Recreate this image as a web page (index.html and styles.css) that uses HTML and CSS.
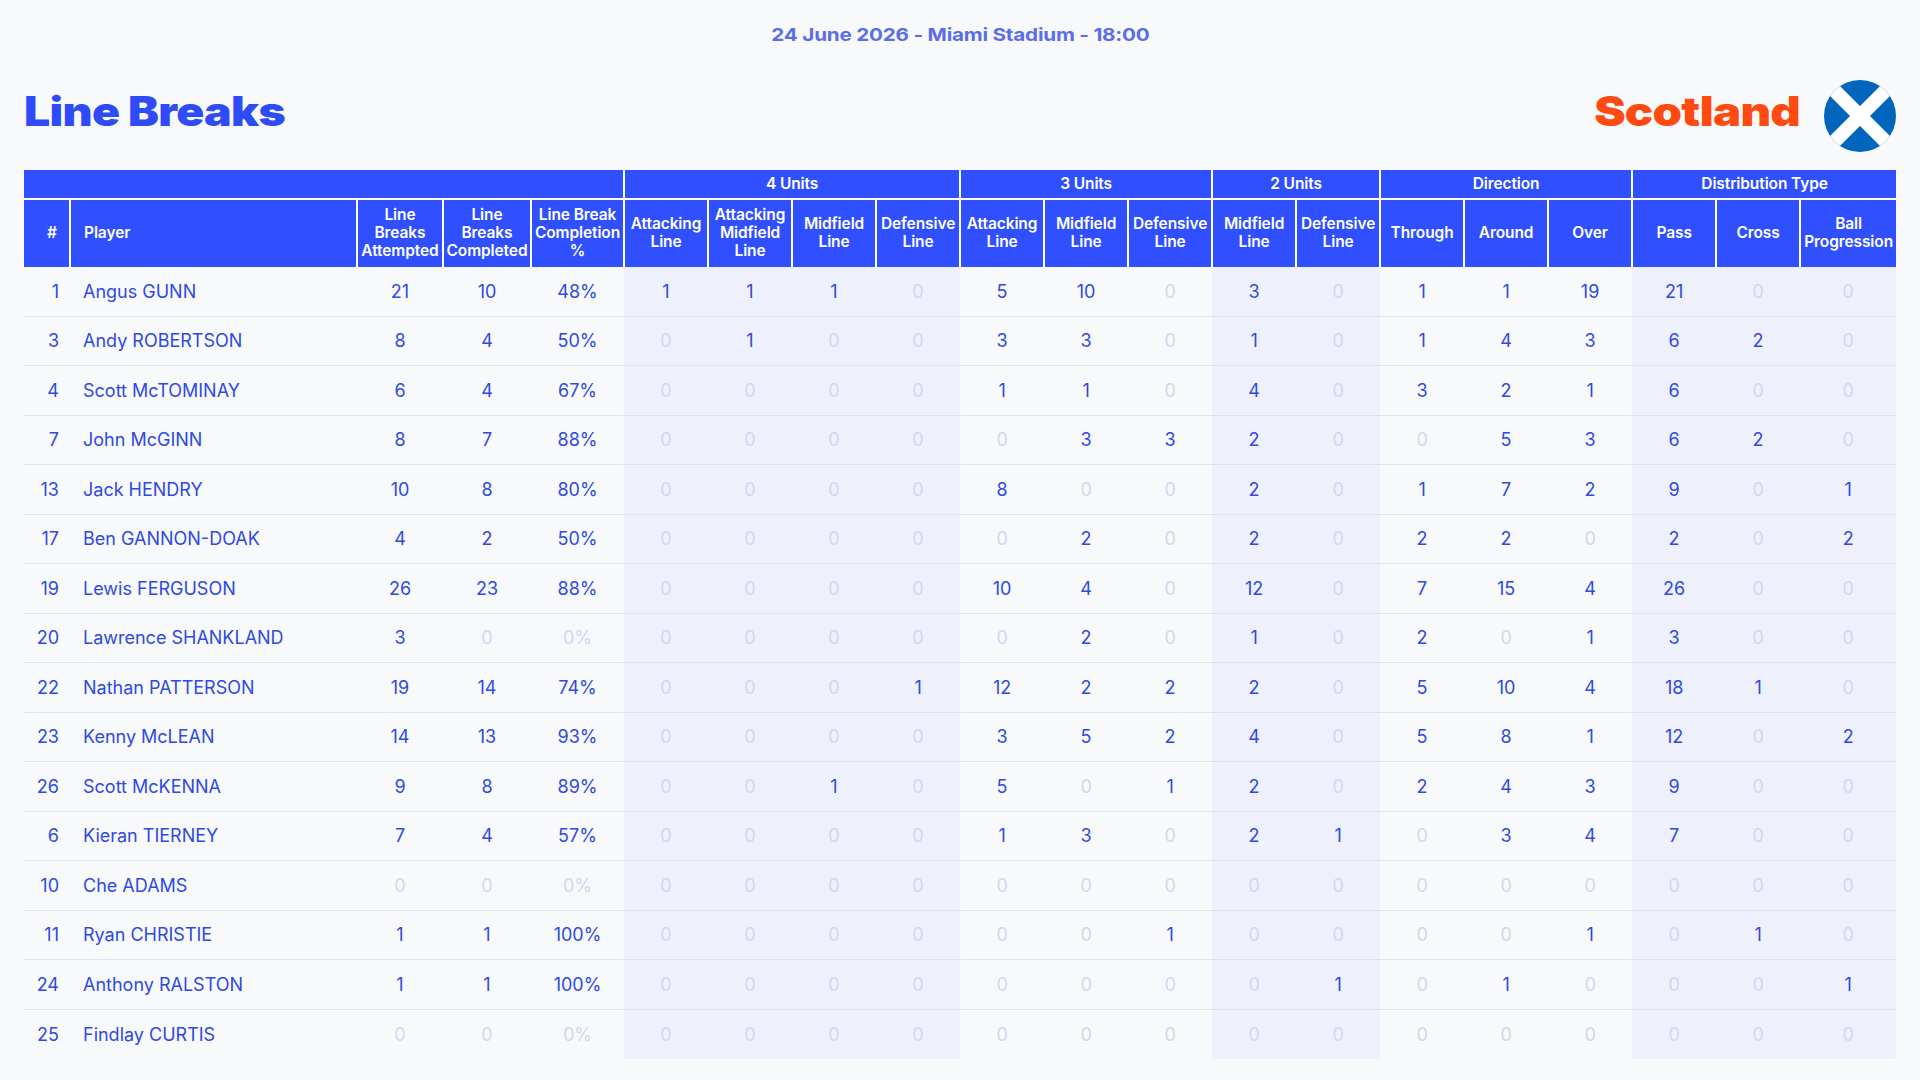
FILE: index.html
```html
<!DOCTYPE html>
<html lang="en">
<head>
<meta charset="utf-8">
<title>Line Breaks - Scotland</title>
<link rel="stylesheet" href="styles.css">
</head>
<body>
<div class="page">
  <div class="date"><span class="date-text">24 June 2026 - Miami Stadium - 18:00</span></div>
  <div class="title-row">
    <h1 class="title">Line Breaks</h1>
    <div class="team">
      <span class="team-name">Scotland</span>
      <svg class="flag" width="72" height="72" viewBox="0 0 72 72">
        <defs><clipPath id="c"><circle cx="36" cy="36" r="36"/></clipPath></defs>
        <g clip-path="url(#c)">
          <rect x="0" y="0" width="72" height="72" fill="#0065bd"/>
          <path d="M0 0 L72 72 M72 0 L0 72" stroke="#fff" stroke-width="14"/>
        </g>
      </svg>
    </div>
  </div>
  <table class="stats">
    <colgroup>
      <col class="w-num"><col class="w-player"><col class="w-att"><col class="w-comp"><col class="w-pct">
      <col class="w-std sh"><col class="w-std sh"><col class="w-std sh"><col class="w-std sh">
      <col class="w-std"><col class="w-std"><col class="w-std">
      <col class="w-std sh"><col class="w-std sh">
      <col class="w-std"><col class="w-std"><col class="w-std">
      <col class="w-std sh"><col class="w-std sh"><col class="w-bp sh">
    </colgroup>
    <thead>
      <tr class="groups">
        <th colspan="5" class="first"></th>
        <th colspan="4">4 Units</th>
        <th colspan="3">3 Units</th>
        <th colspan="2">2 Units</th>
        <th colspan="3">Direction</th>
        <th colspan="3">Distribution Type</th>
      </tr>
      <tr class="cols">
        <th class="num first">#</th>
        <th class="player">Player</th>
        <th>Line<br>Breaks<br>Attempted</th>
        <th>Line<br>Breaks<br>Completed</th>
        <th>Line Break<br>Completion<br>%</th>
        <th>Attacking<br>Line</th>
        <th>Attacking<br>Midfield<br>Line</th>
        <th>Midfield<br>Line</th>
        <th>Defensive<br>Line</th>
        <th>Attacking<br>Line</th>
        <th>Midfield<br>Line</th>
        <th>Defensive<br>Line</th>
        <th>Midfield<br>Line</th>
        <th>Defensive<br>Line</th>
        <th>Through</th>
        <th>Around</th>
        <th>Over</th>
        <th>Pass</th>
        <th>Cross</th>
        <th>Ball<br>Progression</th>
      </tr>
    </thead>
    <tbody>
      <tr><td class="num">1</td><td class="player">Angus GUNN</td><td>21</td><td>10</td><td>48%</td><td>1</td><td>1</td><td>1</td><td class="z">0</td><td>5</td><td>10</td><td class="z">0</td><td>3</td><td class="z">0</td><td>1</td><td>1</td><td>19</td><td>21</td><td class="z">0</td><td class="z">0</td></tr>
      <tr><td class="num">3</td><td class="player">Andy ROBERTSON</td><td>8</td><td>4</td><td>50%</td><td class="z">0</td><td>1</td><td class="z">0</td><td class="z">0</td><td>3</td><td>3</td><td class="z">0</td><td>1</td><td class="z">0</td><td>1</td><td>4</td><td>3</td><td>6</td><td>2</td><td class="z">0</td></tr>
      <tr><td class="num">4</td><td class="player">Scott McTOMINAY</td><td>6</td><td>4</td><td>67%</td><td class="z">0</td><td class="z">0</td><td class="z">0</td><td class="z">0</td><td>1</td><td>1</td><td class="z">0</td><td>4</td><td class="z">0</td><td>3</td><td>2</td><td>1</td><td>6</td><td class="z">0</td><td class="z">0</td></tr>
      <tr><td class="num">7</td><td class="player">John McGINN</td><td>8</td><td>7</td><td>88%</td><td class="z">0</td><td class="z">0</td><td class="z">0</td><td class="z">0</td><td class="z">0</td><td>3</td><td>3</td><td>2</td><td class="z">0</td><td class="z">0</td><td>5</td><td>3</td><td>6</td><td>2</td><td class="z">0</td></tr>
      <tr><td class="num">13</td><td class="player">Jack HENDRY</td><td>10</td><td>8</td><td>80%</td><td class="z">0</td><td class="z">0</td><td class="z">0</td><td class="z">0</td><td>8</td><td class="z">0</td><td class="z">0</td><td>2</td><td class="z">0</td><td>1</td><td>7</td><td>2</td><td>9</td><td class="z">0</td><td>1</td></tr>
      <tr><td class="num">17</td><td class="player">Ben GANNON-DOAK</td><td>4</td><td>2</td><td>50%</td><td class="z">0</td><td class="z">0</td><td class="z">0</td><td class="z">0</td><td class="z">0</td><td>2</td><td class="z">0</td><td>2</td><td class="z">0</td><td>2</td><td>2</td><td class="z">0</td><td>2</td><td class="z">0</td><td>2</td></tr>
      <tr><td class="num">19</td><td class="player">Lewis FERGUSON</td><td>26</td><td>23</td><td>88%</td><td class="z">0</td><td class="z">0</td><td class="z">0</td><td class="z">0</td><td>10</td><td>4</td><td class="z">0</td><td>12</td><td class="z">0</td><td>7</td><td>15</td><td>4</td><td>26</td><td class="z">0</td><td class="z">0</td></tr>
      <tr><td class="num">20</td><td class="player">Lawrence SHANKLAND</td><td>3</td><td class="z">0</td><td class="z">0%</td><td class="z">0</td><td class="z">0</td><td class="z">0</td><td class="z">0</td><td class="z">0</td><td>2</td><td class="z">0</td><td>1</td><td class="z">0</td><td>2</td><td class="z">0</td><td>1</td><td>3</td><td class="z">0</td><td class="z">0</td></tr>
      <tr><td class="num">22</td><td class="player">Nathan PATTERSON</td><td>19</td><td>14</td><td>74%</td><td class="z">0</td><td class="z">0</td><td class="z">0</td><td>1</td><td>12</td><td>2</td><td>2</td><td>2</td><td class="z">0</td><td>5</td><td>10</td><td>4</td><td>18</td><td>1</td><td class="z">0</td></tr>
      <tr><td class="num">23</td><td class="player">Kenny McLEAN</td><td>14</td><td>13</td><td>93%</td><td class="z">0</td><td class="z">0</td><td class="z">0</td><td class="z">0</td><td>3</td><td>5</td><td>2</td><td>4</td><td class="z">0</td><td>5</td><td>8</td><td>1</td><td>12</td><td class="z">0</td><td>2</td></tr>
      <tr><td class="num">26</td><td class="player">Scott McKENNA</td><td>9</td><td>8</td><td>89%</td><td class="z">0</td><td class="z">0</td><td>1</td><td class="z">0</td><td>5</td><td class="z">0</td><td>1</td><td>2</td><td class="z">0</td><td>2</td><td>4</td><td>3</td><td>9</td><td class="z">0</td><td class="z">0</td></tr>
      <tr><td class="num">6</td><td class="player">Kieran TIERNEY</td><td>7</td><td>4</td><td>57%</td><td class="z">0</td><td class="z">0</td><td class="z">0</td><td class="z">0</td><td>1</td><td>3</td><td class="z">0</td><td>2</td><td>1</td><td class="z">0</td><td>3</td><td>4</td><td>7</td><td class="z">0</td><td class="z">0</td></tr>
      <tr><td class="num">10</td><td class="player">Che ADAMS</td><td class="z">0</td><td class="z">0</td><td class="z">0%</td><td class="z">0</td><td class="z">0</td><td class="z">0</td><td class="z">0</td><td class="z">0</td><td class="z">0</td><td class="z">0</td><td class="z">0</td><td class="z">0</td><td class="z">0</td><td class="z">0</td><td class="z">0</td><td class="z">0</td><td class="z">0</td><td class="z">0</td></tr>
      <tr><td class="num">11</td><td class="player">Ryan CHRISTIE</td><td>1</td><td>1</td><td>100%</td><td class="z">0</td><td class="z">0</td><td class="z">0</td><td class="z">0</td><td class="z">0</td><td class="z">0</td><td>1</td><td class="z">0</td><td class="z">0</td><td class="z">0</td><td class="z">0</td><td>1</td><td class="z">0</td><td>1</td><td class="z">0</td></tr>
      <tr><td class="num">24</td><td class="player">Anthony RALSTON</td><td>1</td><td>1</td><td>100%</td><td class="z">0</td><td class="z">0</td><td class="z">0</td><td class="z">0</td><td class="z">0</td><td class="z">0</td><td class="z">0</td><td class="z">0</td><td>1</td><td class="z">0</td><td>1</td><td class="z">0</td><td class="z">0</td><td class="z">0</td><td>1</td></tr>
      <tr><td class="num">25</td><td class="player">Findlay CURTIS</td><td class="z">0</td><td class="z">0</td><td class="z">0%</td><td class="z">0</td><td class="z">0</td><td class="z">0</td><td class="z">0</td><td class="z">0</td><td class="z">0</td><td class="z">0</td><td class="z">0</td><td class="z">0</td><td class="z">0</td><td class="z">0</td><td class="z">0</td><td class="z">0</td><td class="z">0</td><td class="z">0</td></tr>
    </tbody>
  </table>
</div>
</body>
</html>
```
FILE: styles.css
```css
* { box-sizing: border-box; }

body {
  margin: 0;
  background: #f8f9fb;
  font-family: Inter, "Noto Sans", sans-serif;
}

.page {
  padding: 0 24px;
}

.date {
  padding-top: 25px;
  line-height: 20px;
  text-align: center;
  font-size: 18px;
  font-weight: 700;
  color: #5b6ee8;
}

.date-text {
  display: inline-block;
  transform: scaleX(1.15);
  letter-spacing: -0.2px;
}

.title-row {
  display: flex;
  justify-content: space-between;
  align-items: flex-start;
  margin-top: 35px;
  height: 72px;
}

.title {
  margin: 0;
  font-size: 41px;
  line-height: 62px;
  font-weight: 900;
  letter-spacing: -0.6px;
  color: #2f4bf7;
  transform: scaleX(1.13);
  transform-origin: left center;
}

.team {
  display: flex;
  align-items: flex-start;
  gap: 24px;
}

.team-name {
  display: inline-block;
  font-size: 41px;
  line-height: 62px;
  font-weight: 900;
  letter-spacing: -0.6px;
  color: #ff4a12;
  transform: scaleX(1.15);
  transform-origin: right center;
}

.flag {
  display: block;
}

.stats {
  margin-top: 18px;
  width: 1872px;
  border-collapse: collapse;
  table-layout: fixed;
}

.w-num { width: 46px; }
.w-player { width: 287px; }
.w-att { width: 86px; }
.w-comp { width: 88px; }
.w-pct { width: 93px; }
.w-std { width: 84px; }
.w-bp { width: 96px; }
.sh { background: #eef0fb; }

.stats th {
  background: #304ffe;
  color: #fff;
  font-size: 15.5px;
  line-height: 18px;
  font-weight: 600;
  letter-spacing: -0.1px;
  text-align: center;
  vertical-align: middle;
  padding: 0 1px;
  border-left: 2px solid #fff;
}

.stats th.first {
  border-left: 0;
}

.groups th {
  height: 29px;
  border-bottom: 2px solid #fff;
}

.cols th {
  height: 67.5px;
}

.stats th.num {
  text-align: right;
  padding-right: 12px;
}

.stats th.player {
  text-align: left;
  padding-left: 13px;
}

.stats td {
  height: 49.5px;
  padding: 0;
  text-align: center;
  vertical-align: middle;
  font-size: 18px;
  color: #2f49e2;
  border-top: 1px solid #dfe2f4;
}

.stats tbody tr:first-child td {
  border-top: 0;
}

.stats td.num {
  text-align: right;
  padding-right: 11px;
}

.stats td.player {
  text-align: left;
  padding-left: 13px;
}

.stats td.z {
  color: #d2d7f1;
}
```
